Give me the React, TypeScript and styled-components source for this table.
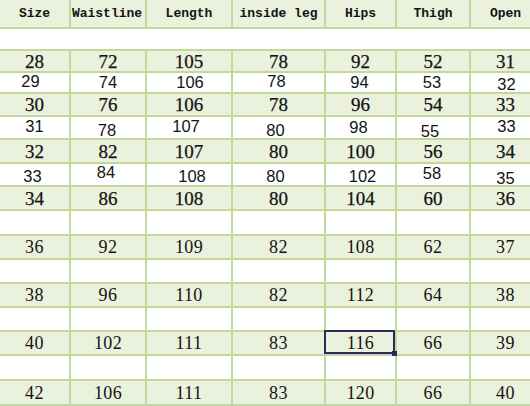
import React from "react";
import styled, { createGlobalStyle, css } from "styled-components";

const GlobalStyle = createGlobalStyle`
  html, body {
    margin: 0;
    padding: 0;
    background: #ffffff;
    overflow: hidden;
  }
`;

const LINE = "#c4d89e";
const GREEN = "#eaf1dc";

const widths = [71, 76, 86, 93, 71, 74, 69];

type Face = "head" | "serif" | "sans" | "wide";

type Nudge = [number, number];

type SheetRow = {
  h: number;
  tone: "green" | "white";
  face: Face;
  cells?: string[];
  nudges?: Nudge[];
  merged?: boolean;
};

const Sheet = styled.div`
  display: grid;
  grid-template-columns: ${widths.map((w) => `${w}px`).join(" ")};
  width: ${widths.reduce((a, b) => a + b, 0)}px;
`;

const faces = {
  head: css`
    font-family: "Liberation Mono", "DejaVu Sans Mono", monospace;
    font-weight: bold;
    font-size: 13px;
  `,
  serif: css`
    font-family: "Liberation Serif", "DejaVu Serif", serif;
    font-size: 19px;
    -webkit-text-stroke: 0.25px #141414;
  `,
  sans: css`
    font-family: "Liberation Sans", Arial, sans-serif;
    font-size: 16.5px;
  `,
  wide: css`
    font-family: "Liberation Serif", "DejaVu Serif", serif;
    font-size: 18px;
    letter-spacing: 0.4px;
  `,
};

const Cell = styled.div<{
  $h: number;
  $tone: "green" | "white";
  $face: Face;
  $span?: boolean;
  $last?: boolean;
  $selected?: boolean;
}>`
  position: relative;
  box-sizing: border-box;
  height: ${(p) => p.$h}px;
  grid-column: ${(p) => (p.$span ? "1 / -1" : "auto")};
  background: ${(p) => (p.$tone === "green" ? GREEN : "#ffffff")};
  border-bottom: 2px solid ${LINE};
  border-right: ${(p) => (p.$span || p.$last ? "none" : `2px solid ${LINE}`)};
  display: flex;
  align-items: center;
  justify-content: center;
  color: #141414;
  line-height: 1;
  ${(p) => faces[p.$face]}

  ${(p) =>
    p.$selected &&
    css`
      &::after {
        content: "";
        position: absolute;
        top: -2px;
        left: -2px;
        right: 0;
        bottom: 0;
        border: 2px solid #2c2860;
      }
      &::before {
        content: "";
        position: absolute;
        right: -2px;
        bottom: -2px;
        width: 5px;
        height: 5px;
        background: #2c2860;
        z-index: 1;
      }
    `}
`;

const Value = styled.span<{ $dx: number; $dy: number }>`
  display: inline-block;
  transform: translate(${(p) => p.$dx}px, ${(p) => p.$dy}px);
  white-space: nowrap;
`;

const empty = ["", "", "", "", "", "", ""];

const rows: SheetRow[] = [
  {
    h: 29,
    tone: "green",
    face: "head",
    cells: ["Size", "Waistline", "Length", "inside leg", "Hips", "Thigh", "Open"],
    nudges: [[0, 0], [-1, 0], [0, 0], [0, 0], [0, 0], [0, 0], [0, 0]],
  },
  { h: 22, tone: "white", face: "sans", merged: true },
  { h: 22, tone: "green", face: "serif", cells: ["28", "72", "105", "78", "92", "52", "31"] },
  {
    h: 21,
    tone: "white",
    face: "sans",
    cells: ["29", "74", "106", "78", "94", "53", "32"],
    nudges: [[-4, -1], [0, 0], [1, 0], [-2, -1], [-1, 0], [-1, 0], [1, 2]],
  },
  { h: 23, tone: "green", face: "serif", cells: ["30", "76", "106", "78", "96", "54", "33"] },
  {
    h: 23,
    tone: "white",
    face: "sans",
    cells: ["31", "78", "107", "80", "98", "55", "33"],
    nudges: [[0, -1], [-1, 3], [-3, -1], [-3, 3], [-2, 0], [-3, 4], [1, -1]],
  },
  { h: 24, tone: "green", face: "serif", cells: ["32", "82", "107", "80", "100", "56", "34"] },
  {
    h: 23,
    tone: "white",
    face: "sans",
    cells: ["33", "84", "108", "80", "102", "58", "35"],
    nudges: [[-2, 2], [-2, -2], [3, 2], [-3, 2], [2, 2], [-1, -1], [0, 4]],
  },
  { h: 24, tone: "green", face: "serif", cells: ["34", "86", "108", "80", "104", "60", "36"] },
  { h: 25, tone: "white", face: "wide", cells: empty },
  { h: 24, tone: "green", face: "wide", cells: ["36", "92", "109", "82", "108", "62", "37"] },
  { h: 24, tone: "white", face: "wide", cells: empty },
  { h: 24, tone: "green", face: "wide", cells: ["38", "96", "110", "82", "112", "64", "38"] },
  { h: 24, tone: "white", face: "wide", cells: empty },
  { h: 24, tone: "green", face: "wide", cells: ["40", "102", "111", "83", "116", "66", "39"] },
  { h: 25, tone: "white", face: "wide", cells: empty },
  { h: 25, tone: "green", face: "wide", cells: ["42", "106", "111", "83", "120", "66", "40"] },
];

const SELECTED_ROW = 14;
const SELECTED_COL = 4;

export default function App() {
  return (
    <>
      <GlobalStyle />
      <Sheet>
        {rows.map((row, r) =>
          row.merged ? (
            <Cell key={r} $h={row.h} $tone={row.tone} $face={row.face} $span />
          ) : (
            (row.cells ?? empty).map((text, c) => {
              const [dx, dy] = row.nudges?.[c] ?? [0, 0];
              return (
                <Cell
                  key={`${r}-${c}`}
                  $h={row.h}
                  $tone={row.tone}
                  $face={row.face}
                  $last={c === widths.length - 1}
                  $selected={r === SELECTED_ROW && c === SELECTED_COL}
                >
                  <Value $dx={dx} $dy={dy}>
                    {text}
                  </Value>
                </Cell>
              );
            })
          )
        )}
      </Sheet>
    </>
  );
}
